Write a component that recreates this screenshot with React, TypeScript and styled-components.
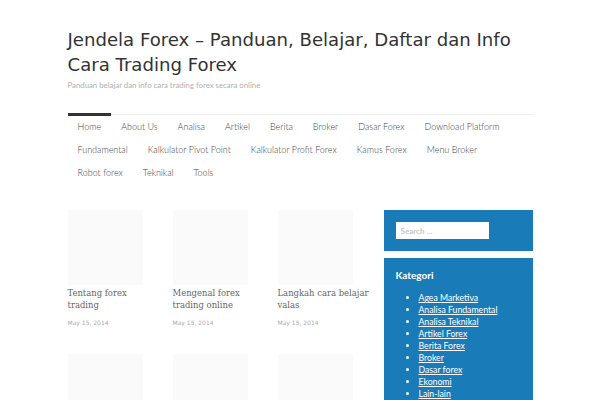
import React from 'react';
import styled, { createGlobalStyle } from 'styled-components';

const GlobalStyle = createGlobalStyle`
  body {
    margin: 0;
    background: #fff;
    font-family: Lato, "Open Sans", sans-serif;
  }
`;

const Page = styled.div`
  width: 465px;
  margin: 0 auto;
  padding-top: 27px;
`;

const SiteTitle = styled.h1`
  margin: 0;
  font-family: "DejaVu Sans", sans-serif;
  font-weight: normal;
  font-size: 18.1px;
  line-height: 25px;
  color: #333;
`;

const Tagline = styled.p`
  margin: 3px 0 0;
  font-family: Lato, sans-serif;
  font-size: 7.8px;
  line-height: 10px;
  color: #b0b0b0;
`;

const Nav = styled.nav`
  margin-top: 24px;
  border-top: 1px solid #eee;
  display: flex;
  flex-wrap: wrap;
`;

const NavItem = styled.a<{ active?: boolean }>`
  position: relative;
  padding: 0 10px;
  font-size: 9px;
  font-weight: 300;
  line-height: 23px;
  color: #444;
  text-decoration: none;
  ${p => p.active ? `
  &::before {
    content: '';
    position: absolute;
    left: 0;
    right: 0;
    top: -2px;
    height: 3px;
    background: #333;
  }
  ` : ''}
`;

const Content = styled.div`
  margin-top: 26px;
  display: grid;
  grid-template-columns: 305px 149px;
  column-gap: 11px;
  align-items: start;
`;

const Posts = styled.div`
  display: grid;
  grid-template-columns: repeat(3, 95px);
  column-gap: 10px;
`;

const Post = styled.article`
  height: 144px;
`;

const Thumb = styled.div`
  width: 75px;
  height: 75px;
  background: #fafafa;
`;

const PostTitle = styled.h2`
  margin: 2px 0 0;
  max-width: 92px;
  font-family: "DejaVu Serif Condensed", "DejaVu Serif", serif;
  font-stretch: condensed;
  font-size: 9.4px;
  font-weight: normal;
  line-height: 12px;
  color: #666;
`;

const PostDate = styled.div`
  margin-top: 7px;
  font-family: "DejaVu Sans", sans-serif;
  font-size: 6px;
  line-height: 10px;
  color: #aaa;
`;

const Widget = styled.section`
  background: #1a7bb9;
  padding: 12px;
  & + & {
    margin-top: 7px;
  }
`;

const SearchInput = styled.input`
  display: block;
  box-sizing: border-box;
  width: 93px;
  height: 17px;
  border: none;
  padding: 0 5px;
  font-family: Lato, sans-serif;
  font-size: 8px;
  font-weight: bold;
  &::placeholder {
    color: #c8c8c8;
  }
`;

const WidgetTitle = styled.h3`
  margin: 0;
  font-size: 10px;
  font-weight: bold;
  line-height: 10px;
  color: #fff;
`;

const CatList = styled.ul`
  margin: 12px 0 0;
  padding-left: 23px;
  color: #fff;
  font-size: 8.7px;
  line-height: 12px;
`;

const CatLink = styled.a`
  color: #fff;
  text-decoration: underline;
`;

const menu = [
  'Home', 'About Us', 'Analisa', 'Artikel', 'Berita', 'Broker', 'Dasar Forex', 'Download Platform',
  'Fundamental', 'Kalkulator Pivot Point', 'Kalkulator Profit Forex', 'Kamus Forex', 'Menu Broker',
  'Robot forex', 'Teknikal', 'Tools',
];

const posts = [
  'Tentang forex trading',
  'Mengenal forex trading online',
  'Langkah cara belajar valas',
  '', '', '',
];

const categories = [
  'Agea Marketiva', 'Analisa Fundamental', 'Analisa Teknikal', 'Artikel Forex', 'Berita Forex',
  'Broker', 'Dasar forex', 'Ekonomi', 'Lain-lain', 'Pialang',
];

const App: React.FunctionComponent = () => (
  <>
    <GlobalStyle />
    <Page>
      <SiteTitle>Jendela Forex – Panduan, Belajar, Daftar dan Info Cara Trading Forex</SiteTitle>
      <Tagline>Panduan belajar dan info cara trading forex secara online</Tagline>
      <Nav>
        {menu.map((m, i) => <NavItem key={m} href="#" active={i === 0}>{m}</NavItem>)}
      </Nav>
      <Content>
        <Posts>
          {posts.map((t, i) => (
            <Post key={i}>
              <Thumb />
              {t && <PostTitle>{t}</PostTitle>}
              {t && <PostDate>May 15, 2014</PostDate>}
            </Post>
          ))}
        </Posts>
        <aside>
          <Widget>
            <SearchInput placeholder="Search …" />
          </Widget>
          <Widget>
            <WidgetTitle>Kategori</WidgetTitle>
            <CatList>
              {categories.map(c => <li key={c}><CatLink href="#">{c}</CatLink></li>)}
            </CatList>
          </Widget>
        </aside>
      </Content>
    </Page>
  </>
);

export default App;
